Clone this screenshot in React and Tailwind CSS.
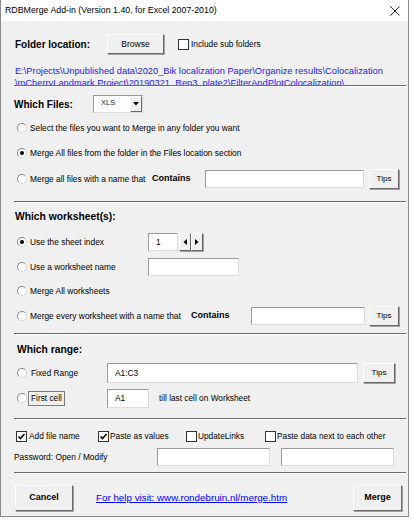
import React from "react";

const font = { fontFamily: '"Liberation Sans", Arial, sans-serif' };

function Radio({ checked }) {
  return (
    <div className="flex h-[10px] w-[10px] shrink-0 items-center justify-center rounded-full border border-t-[#8c8c8c] border-l-[#8c8c8c] border-b-[#d6d6d6] border-r-[#d6d6d6] bg-white">
      {checked && <div className="h-[4px] w-[4px] rounded-full bg-black" />}
    </div>
  );
}

function Check({ checked }) {
  return (
    <div className="flex h-[11px] w-[11px] shrink-0 items-center justify-center border border-[#333] bg-white">
      {checked && (
        <svg width="9" height="9" viewBox="0 0 9 9">
          <path d="M1.5 4.5 L3.5 6.5 L7.5 2" stroke="#000" strokeWidth="1.6" fill="none" />
        </svg>
      )}
    </div>
  );
}

function Box({ className, children }) {
  return (
    <div
      className={
        "flex shrink-0 items-center border border-t-[#9a9a9a] border-l-[#9a9a9a] border-b-[#dcdcdc] border-r-[#dcdcdc] bg-white pl-[7px] text-[8.4px] " +
        className
      }
    >
      {children}
    </div>
  );
}

function Btn({ className, children }) {
  return (
    <div
      className={
        "flex shrink-0 items-center justify-center border border-t-white border-l-white border-b-[#696969] border-r-[#696969] bg-[#f0f0f0] shadow-[1px_1px_0_#a0a0a0] " +
        className
      }
    >
      {children}
    </div>
  );
}

function Sep() {
  return <div className="ml-[13px] w-[392px] border-t border-b border-t-[#6d6d6d] border-b-white" />;
}

export default function App() {
  return (
    <div className="h-[520px] w-[412px] bg-[#fafafa]" style={font}>
      <div className="h-[517px] w-[409px] border border-t-0 border-[#8a8a8a] bg-[#f0f0f0]">
        {/* Title bar */}
        <div className="flex h-[21px] items-center justify-between bg-white pl-[4px] pr-[8px] text-[8.8px] text-black">
          <span>RDBMerge Add-in (Version 1.40, for Excel 2007-2010)</span>
          <svg width="10" height="10" viewBox="0 0 10 10">
            <path d="M0.5 0.5 L9.5 9.5 M9.5 0.5 L0.5 9.5" stroke="#222" strokeWidth="1" />
          </svg>
        </div>

        {/* Folder location */}
        <div className="mt-[13px] flex h-[20px] items-center pl-[14px]">
          <div className="w-[92px] text-[10px] font-bold">Folder location:</div>
          <Btn className="h-[20px] w-[57px] text-[8.5px]">Browse</Btn>
          <div className="ml-[14px]">
            <Check />
          </div>
          <span className="ml-[1px] pl-[1px] text-[8.3px]">Include sub folders</span>
        </div>
        <div className="mt-[11px] h-[20px] overflow-hidden pl-[14px] text-[9.3px] leading-[12px] text-[#2424f0]">
          <div>E:\Projects\Unpublished data\2020_Bik localization Paper\Organize results\Colocalization</div>
          <div>\mCherryLandmark Project\20190321_Rep3_plate2\FilterAndPlotColocalization\</div>
        </div>
        <Sep />

        {/* Which Files */}
        <div className="mt-[8px] flex h-[18px] items-center pl-[13px]">
          <div className="w-[79px] text-[10px] font-bold">Which Files:</div>
          <div className="flex h-[18px] w-[50px] border border-t-[#9a9a9a] border-l-[#9a9a9a] border-b-[#dcdcdc] border-r-[#dcdcdc] bg-white">
            <div className="flex-1 pl-[7px] pt-[1px] text-[7.5px] text-[#202040]">XLS</div>
            <div className="flex w-[12px] items-center justify-center border border-t-white border-l-white border-b-[#696969] border-r-[#696969] bg-[#f0f0f0]">
              <svg width="6" height="4" viewBox="0 0 6 4">
                <path d="M0 0 L6 0 L3 3.5 Z" fill="#000" />
              </svg>
            </div>
          </div>
        </div>
        <div className="mt-[5px] flex h-[20px] items-center pl-[16px] text-[8.4px]">
          <Radio />
          <span className="ml-[3px]">Select the files you want to Merge in any folder you want</span>
        </div>
        <div className="mt-[5px] flex h-[20px] items-center pl-[16px] text-[8.4px]">
          <Radio checked />
          <span className="ml-[3px]">Merge All files from the folder in the Files location section</span>
        </div>
        <div className="mt-[6px] flex h-[20px] items-center pl-[16px] text-[8.4px]">
          <Radio />
          <span className="ml-[3px] w-[122px]">Merge all files with a name that</span>
          <span className="w-[53px] text-[9px] font-bold">Contains</span>
          <Box className="h-[18px] w-[159px]" />
          <Btn className="ml-[5px] h-[20px] w-[30px] text-[8px]">Tips</Btn>
        </div>
        <div className="mt-[12px]">
          <Sep />
        </div>

        {/* Which worksheet(s) */}
        <div className="mt-[6px] flex h-[16px] items-center pl-[14px] text-[10.3px] font-bold">Which worksheet(s):</div>
        <div className="mt-[7px] flex h-[20px] items-center pl-[16px] text-[8.4px]">
          <Radio checked />
          <span className="ml-[3px] w-[118px]">Use the sheet index</span>
          <Box className="h-[18px] w-[30px]">1</Box>
          <div className="ml-[1px] flex h-[18px]">
            <Btn className="h-[18px] w-[12px]">
              <svg width="4" height="6" viewBox="0 0 4 6">
                <path d="M4 0 L4 6 L0.5 3 Z" fill="#000" />
              </svg>
            </Btn>
            <Btn className="h-[18px] w-[12px]">
              <svg width="4" height="6" viewBox="0 0 4 6">
                <path d="M0 0 L0 6 L3.5 3 Z" fill="#000" />
              </svg>
            </Btn>
          </div>
        </div>
        <div className="mt-[5px] flex h-[20px] items-center pl-[16px] text-[8.4px]">
          <Radio />
          <span className="ml-[3px] w-[118px]">Use a worksheet name</span>
          <Box className="h-[18px] w-[91px]" />
        </div>
        <div className="mt-[4px] flex h-[20px] items-center pl-[16px] text-[8.4px]">
          <Radio />
          <span className="ml-[3px]">Merge All worksheets</span>
        </div>
        <div className="mt-[5px] flex h-[20px] items-center pl-[16px] text-[8.4px]">
          <Radio />
          <span className="ml-[3px] w-[161px]">Merge every worksheet with a name that</span>
          <span className="w-[60px] text-[9px] font-bold">Contains</span>
          <Box className="h-[18px] w-[114px]" />
          <Btn className="ml-[4px] h-[20px] w-[30px] text-[8px]">Tips</Btn>
        </div>
        <div className="mt-[7px]">
          <Sep />
        </div>

        {/* Which range */}
        <div className="mt-[7px] flex h-[16px] items-center pl-[16px] text-[10.3px] font-bold">Which range:</div>
        <div className="mt-[5px] flex h-[20px] items-center pl-[16px] text-[8.3px]">
          <Radio />
          <span className="ml-[4px] w-[76px]">Fixed Range</span>
          <Box className="h-[20px] w-[251px]">A1:C3</Box>
          <Btn className="ml-[5px] h-[20px] w-[32px] text-[8px]">Tips</Btn>
        </div>
        <div className="mt-[5px] flex h-[20px] items-center pl-[16px] text-[8.3px]">
          <Radio />
          <div className="ml-[1px] flex h-[15px] w-[37px] items-center border border-[#7a7a7a] pl-[2px]">First cell</div>
          <div className="w-[42px]" />
          <Box className="h-[19px] w-[42px]">A1</Box>
          <span className="ml-[10px]">till last cell on Worksheet</span>
        </div>
        <div className="mt-[10px]">
          <Sep />
        </div>

        {/* Options */}
        <div className="mt-[8px] flex h-[16px] items-center pl-[15px] text-[8.3px]">
          <Check checked />
          <span className="ml-[2px] w-[69px]">Add file name</span>
          <Check checked />
          <span className="ml-[1px] w-[76px]">Paste as values</span>
          <Check />
          <span className="ml-[1px] w-[67px]">UpdateLinks</span>
          <Check />
          <span className="ml-[1px]">Paste data next to each other</span>
        </div>
        <div className="mt-[4px] flex h-[18px] items-center pl-[13px] text-[8.4px]">
          <span className="w-[143px]">Password: Open / Modify</span>
          <Box className="h-[18px] w-[113px]" />
          <Box className="ml-[11px] h-[18px] w-[113px]" />
        </div>
        <div className="mt-[6px]">
          <Sep />
        </div>

        {/* Buttons */}
        <div className="mt-[11px] flex h-[26px] items-center pl-[14px]">
          <Btn className="h-[26px] w-[58px] text-[9px] font-bold">Cancel</Btn>
          <a className="ml-[23px] text-[9.8px] text-[#0000ff] underline">For help visit: www.rondebruin.nl/merge.htm</a>
          <div className="flex-1" />
          <Btn className="mr-[6px] h-[26px] w-[49px] text-[9px] font-bold">Merge</Btn>
        </div>
      </div>
    </div>
  );
}
